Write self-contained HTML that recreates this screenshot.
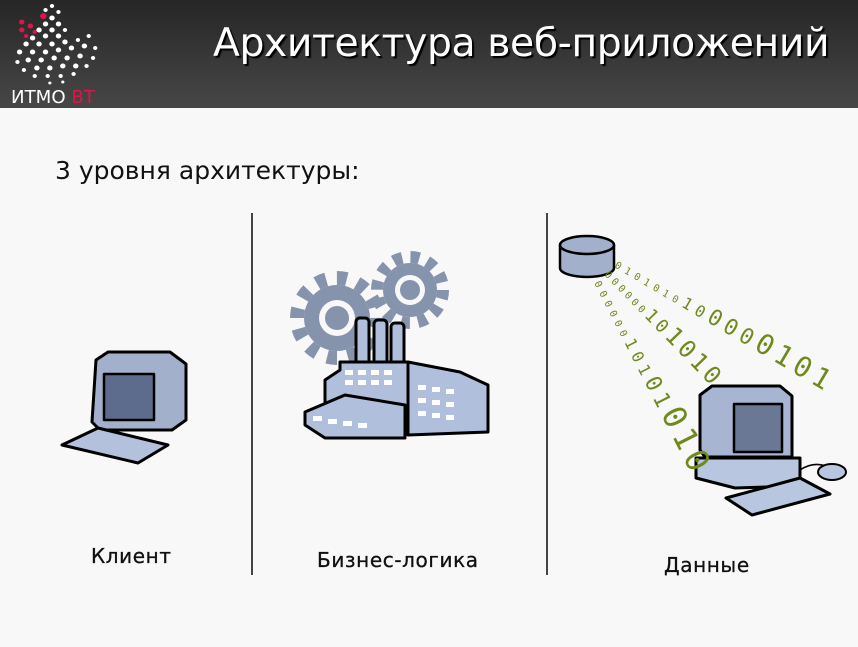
<!DOCTYPE html><html><head><meta charset="utf-8"><style>
body{margin:0;width:858px;height:647px;background:#f8f8f8;font-family:"Liberation Sans","DejaVu Sans",sans-serif;position:relative;overflow:hidden}
.hd{position:absolute;left:0;top:0;width:858px;height:108px;background:linear-gradient(#262626,#474747)}
.t{position:absolute;left:213px;top:21px;font-family:"DejaVu Sans",sans-serif;font-size:39.3px;color:#fff;text-shadow:2px 2px 1px #000;letter-spacing:-0.4px;white-space:nowrap}
.s{position:absolute;left:55px;top:156px;font-family:"DejaVu Sans",sans-serif;font-size:25px;color:#111}
.l{position:absolute;font-family:"DejaVu Sans",sans-serif;font-size:20px;color:#111;letter-spacing:0.6px;-webkit-text-stroke:0.3px #111}
.v{position:absolute;top:213px;width:2px;height:362px;background:#444}
</style></head><body>
<div class="hd"></div>
<svg style="position:absolute;left:0;top:0" width="110" height="108">
<g transform="translate(-2,0) scale(1.08,1)">
<g fill="#fff">
<circle cx="50" cy="6" r="2"/><circle cx="44" cy="10" r="2"/><circle cx="56" cy="12" r="2"/><circle cx="50" cy="18" r="2.5"/><circle cx="44" cy="24" r="2.5"/><circle cx="56" cy="24" r="2.5"/><circle cx="50" cy="30" r="2.5"/><circle cx="62" cy="30" r="2"/><circle cx="38" cy="30" r="2.5"/><circle cx="44" cy="36" r="2.5"/><circle cx="56" cy="36" r="2.5"/><circle cx="32" cy="38" r="2.5"/><circle cx="26" cy="44" r="2.5"/><circle cx="38" cy="44" r="2.5"/><circle cx="50" cy="44" r="2.5"/><circle cx="62" cy="42" r="2.5"/><circle cx="74" cy="40" r="2"/><circle cx="84" cy="36" r="2"/><circle cx="20" cy="52" r="2.5"/><circle cx="32" cy="52" r="2.5"/><circle cx="44" cy="52" r="2.5"/><circle cx="56" cy="50" r="2.5"/><circle cx="68" cy="48" r="2.5"/><circle cx="80" cy="46" r="2.5"/><circle cx="90" cy="48" r="2"/><circle cx="18" cy="62" r="2"/><circle cx="28" cy="60" r="2.5"/><circle cx="40" cy="60" r="2.5"/><circle cx="52" cy="58" r="2.5"/><circle cx="64" cy="58" r="2.5"/><circle cx="76" cy="56" r="2.5"/><circle cx="88" cy="58" r="2"/><circle cx="24" cy="70" r="2"/><circle cx="36" cy="68" r="2.5"/><circle cx="48" cy="68" r="2.5"/><circle cx="60" cy="66" r="2.5"/><circle cx="72" cy="66" r="2.5"/><circle cx="82" cy="66" r="2"/><circle cx="34" cy="76" r="2"/><circle cx="46" cy="76" r="2"/><circle cx="58" cy="76" r="2"/><circle cx="70" cy="74" r="2"/><circle cx="48" cy="83" r="1.5"/><circle cx="60" cy="82" r="1.5"/>
</g>
<g fill="#e0134a"><circle cx="42" cy="16" r="3"/><circle cx="22" cy="22" r="2.5"/><circle cx="30" cy="26" r="2.5"/><circle cx="22" cy="30" r="2.5"/><circle cx="34" cy="32" r="2"/><circle cx="26" cy="36" r="2"/></g>
</g>
<text x="11" y="103" font-family="DejaVu Sans" font-size="18" fill="#fff" textLength="84" lengthAdjust="spacingAndGlyphs">ИТМО <tspan fill="#e0134a">ВТ</tspan></text>
</svg>
<div class="t">Архитектура веб-приложений</div>
<div class="s">3 уровня архитектуры:</div>
<div class="v" style="left:251px"></div><div class="v" style="left:546px"></div>
<div class="l" style="left:91px;top:544px">Клиент</div>
<div class="l" style="left:317px;top:548px">Бизнес-логика</div>
<div class="l" style="left:664px;top:553px">Данные</div>
<svg style="position:absolute;left:0;top:0" width="858" height="647">
<g stroke="#000" stroke-width="3" stroke-linejoin="round">
<path d="M96 360 L108 352 L170 352 L186 364 L186 420 L172 430 L100 430 L92 422 Z" fill="#a3b0cc"/>
<path d="M104 374 L154 374 L154 420 L104 420Z" fill="#5d6c8d" stroke-width="2.5"/>
<path d="M62 445 L98 428 L168 445 L138 463 Z" fill="#b4c1dc"/>
</g>
<g stroke="#000" stroke-width="3" stroke-linejoin="round">
<path d="M700 395 L712 386 L780 386 L792 396 L792 457 L705 457 L700 450Z" fill="#a7b5d2"/>
<path d="M734 404 L782 404 L782 452 L734 452Z" fill="#6a7896" stroke-width="2.5"/>
<path d="M696 458 L800 458 L800 486 L735 488 L696 478Z" fill="#b8c6e0"/>
<path d="M726 498 L800 478 L830 494 L752 515Z" fill="#b8c6e0"/>
<path d="M800 470 Q815 460 830 468" fill="none" stroke-width="1.5"/>
<ellipse cx="832" cy="472" rx="14" ry="8" fill="#b8c6e0" stroke-width="2"/>
</g>
<g fill="#8693ac">
<circle cx="337" cy="318" r="33"/><circle cx="410" cy="290" r="27"/>
<circle cx="337" cy="318" r="40" fill="none" stroke="#8693ac" stroke-width="14" stroke-dasharray="10 10.9"/>
<circle cx="410" cy="290" r="33" fill="none" stroke="#8693ac" stroke-width="12" stroke-dasharray="9 8.3"/>
</g>
<circle cx="337" cy="318" r="18" fill="#f8f8f8"/><circle cx="410" cy="290" r="15" fill="#f8f8f8"/>
<circle cx="337" cy="318" r="12" fill="#8693ac"/><circle cx="410" cy="290" r="10" fill="#8693ac"/>
<g fill="#b0bfdc" stroke="#000" stroke-width="3" stroke-linejoin="round">
<rect x="356" y="318" width="13" height="50" rx="4"/><rect x="374" y="320" width="13" height="50" rx="4"/><rect x="391" y="323" width="13" height="50" rx="4"/>
<path d="M340 362 L408 362 L408 430 L325 430 L325 380 L340 370Z"/>
<path d="M408 362 L460 372 L488 385 L488 432 L408 435Z"/>
<path d="M305 412 L345 395 L405 405 L405 438 L325 438 L305 425Z"/>
</g>
<g fill="#fff">
<rect x="345" y="370" width="8" height="5"/><rect x="358" y="370" width="8" height="5"/><rect x="371" y="370" width="8" height="5"/><rect x="384" y="370" width="8" height="5"/>
<rect x="345" y="380" width="8" height="5"/><rect x="358" y="380" width="8" height="5"/><rect x="371" y="380" width="8" height="5"/><rect x="384" y="380" width="8" height="5"/>
<rect x="418" y="385" width="8" height="5"/><rect x="432" y="387" width="8" height="5"/><rect x="446" y="389" width="8" height="5"/>
<rect x="418" y="398" width="8" height="5"/><rect x="432" y="400" width="8" height="5"/><rect x="446" y="402" width="8" height="5"/>
<rect x="418" y="411" width="8" height="5"/><rect x="432" y="413" width="8" height="5"/><rect x="446" y="415" width="8" height="5"/>
<rect x="313" y="416" width="9" height="5"/><rect x="328" y="419" width="9" height="5"/><rect x="343" y="421" width="9" height="5"/><rect x="358" y="423" width="9" height="5"/>
</g>
<path d="M560 245 V268 A27 9 0 0 0 614 268 V245" fill="#a3b0cc" stroke="#000" stroke-width="2.5"/>
<ellipse cx="587" cy="245" rx="27" ry="9" fill="#a3b0cc" stroke="#000" stroke-width="2.5"/>
<g font-family="DejaVu Sans Mono" fill="#6f8a1c">
<text transform="translate(614,267) rotate(30.5)" letter-spacing="5"><tspan font-size="10">0101010</tspan><tspan font-size="16">10</tspan><tspan font-size="22">000</tspan><tspan font-size="28">0101</tspan></text>
<text transform="translate(604,275) rotate(46)" letter-spacing="3.5"><tspan font-size="10">000000</tspan><tspan font-size="18">10</tspan><tspan font-size="24">1010</tspan></text>
<text transform="translate(594,283) rotate(63)" letter-spacing="5"><tspan font-size="10">000000</tspan><tspan font-size="16">101</tspan><tspan font-size="22">01</tspan><tspan font-size="32">010</tspan></text>
</g>
</svg>
</body></html>
